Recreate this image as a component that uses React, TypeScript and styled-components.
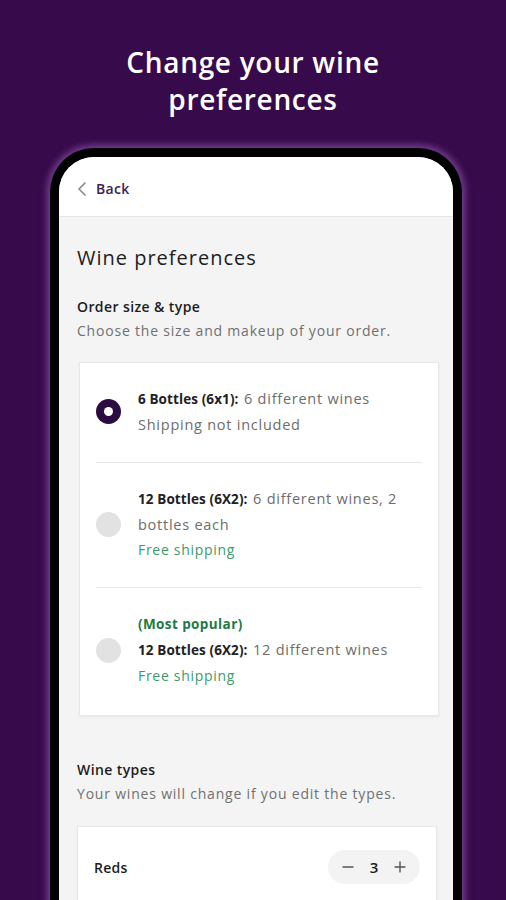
import React from "react";
import styled, { createGlobalStyle } from "styled-components";

const GlobalStyle = createGlobalStyle`
  html, body {
    margin: 0;
    padding: 0;
    background: #370a4b;
  }
  * {
    box-sizing: border-box;
  }
`;

const Page = styled.div`
  width: 506px;
  height: 900px;
  overflow: hidden;
  background: #370a4b;
  font-family: "Open Sans", sans-serif;
`;

const Heading = styled.h1`
  margin: 0;
  padding-top: 44px;
  height: 148px;
  text-align: center;
  color: #ffffff;
  font-family: "Open Sans", sans-serif;
  font-size: 28px;
  font-weight: 600;
  line-height: 37px;
  letter-spacing: 0.7px;
`;

const Phone = styled.div`
  margin: 0 44px 0 50px;
  height: 800px;
  border: 9px solid #000;
  border-bottom: none;
  border-radius: 44px 44px 0 0;
  box-shadow: 0 0 7px 3px rgba(170, 110, 200, 0.55);
  overflow: hidden;
  background: #f4f4f4;
`;

const TopBar = styled.div`
  height: 60px;
  display: flex;
  align-items: center;
  gap: 9px;
  padding: 4px 0 0 18px;
  background: #fff;
  border-bottom: 1px solid #e6e6e6;
  color: #3a2156;
  font-size: 14px;
  font-weight: 600;
  letter-spacing: 0.3px;
`;

const Content = styled.div`
  padding: 27px 14px 0 18px;
`;

const Title = styled.h2`
  margin: 0 0 24px;
  font-size: 20px;
  font-weight: 500;
  color: #1d1d1d;
  letter-spacing: 1px;
`;

const SectionTitle = styled.div`
  font-size: 14px;
  font-weight: 600;
  color: #1d1d1d;
  line-height: 24px;
  letter-spacing: 0.4px;
`;

const SectionHint = styled.div`
  font-size: 14px;
  color: #707070;
  line-height: 24px;
  letter-spacing: 0.8px;
`;

const Card = styled.div<{ $top: number; $inset: number }>`
  margin: ${(p) => p.$top}px 0 0 ${(p) => p.$inset}px;
  width: 360px;
  background: #fff;
  border: 1px solid #e8e8e8;
  box-shadow: 0 1px 2px rgba(0, 0, 0, 0.06);
  padding: 0 16px;
`;

const Option = styled.div<{ $last?: boolean }>`
  display: flex;
  align-items: center;
  gap: 17px;
  padding: ${(p) => (p.$last ? "24px 0 27px" : "23px 0 25px")};
  border-bottom: ${(p) => (p.$last ? "none" : "1px solid #e6e6e6")};
`;

const Radio = styled.div<{ $checked?: boolean }>`
  flex: none;
  width: 25px;
  height: 25px;
  border-radius: 50%;
  background: ${(p) => (p.$checked ? "#2c0b40" : "#e2e2e2")};
  display: flex;
  align-items: center;
  justify-content: center;
  &::after {
    content: "";
    display: ${(p) => (p.$checked ? "block" : "none")};
    width: 9px;
    height: 9px;
    border-radius: 50%;
    background: #fff;
  }
`;

const OptionText = styled.div`
  font-size: 14.5px;
  line-height: 25px;
  color: #6d6d6d;
  letter-spacing: 0.75px;
`;

const Strong = styled.span`
  font-size: 13.5px;
  font-weight: 700;
  color: #222;
  letter-spacing: 0.1px;
  margin-right: 1px;
`;

const Green = styled.div<{ $bold?: boolean }>`
  color: ${(p) => (p.$bold ? "#1d7a46" : "#3c9a6a")};
  font-weight: ${(p) => (p.$bold ? 700 : 400)};
  font-size: ${(p) => (p.$bold ? "13.5px" : "14px")};
  letter-spacing: ${(p) => (p.$bold ? "0.4px" : "0.7px")};
`;

const TypesSection = styled.div`
  margin-top: 42px;
`;

const TypeRow = styled.div`
  display: flex;
  align-items: center;
  justify-content: space-between;
  padding: 23px 0 30px;
`;

const TypeName = styled.div`
  font-size: 14px;
  font-weight: 600;
  color: #1d1d1d;
  letter-spacing: 0.3px;
`;

const Stepper = styled.div`
  width: 92px;
  height: 34px;
  border-radius: 17px;
  background: #f3f3f3;
  display: flex;
  align-items: center;
  justify-content: space-around;
  padding: 0 6px;
  font-size: 15px;
  color: #333;
`;

const StepCount = styled.span`
  font-weight: 600;
  color: #1d1d1d;
`;

const Chevron = () => (
  <svg width="10" height="16" viewBox="0 0 10 16" fill="none">
    <path d="M8 2L2 8l6 6" stroke="#888" strokeWidth="1.6" strokeLinecap="round" strokeLinejoin="round" />
  </svg>
);

const Minus = () => (
  <svg width="12" height="12" viewBox="0 0 12 12">
    <path d="M1 6h10" stroke="#555" strokeWidth="1.4" strokeLinecap="round" />
  </svg>
);

const Plus = () => (
  <svg width="12" height="12" viewBox="0 0 12 12">
    <path d="M1 6h10M6 1v10" stroke="#555" strokeWidth="1.4" strokeLinecap="round" />
  </svg>
);

const App: React.FC = () => {
  return (
    <Page>
      <GlobalStyle />
      <Heading>
        Change your wine
        <br />
        preferences
      </Heading>
      <Phone>
        <TopBar>
          <Chevron />
          Back
        </TopBar>
        <Content>
          <Title>Wine preferences</Title>
          <SectionTitle>Order size &amp; type</SectionTitle>
          <SectionHint>Choose the size and makeup of your order.</SectionHint>

          <Card $top={19} $inset={2}>
            <Option>
              <Radio $checked />
              <OptionText>
                <Strong>6 Bottles (6x1):</Strong> 6 different wines
                <br />
                Shipping not included
              </OptionText>
            </Option>
            <Option>
              <Radio />
              <OptionText>
                <Strong>12 Bottles (6X2):</Strong> 6 different wines, 2 bottles each
                <Green>Free shipping</Green>
              </OptionText>
            </Option>
            <Option $last>
              <Radio />
              <OptionText>
                <Green $bold>(Most popular)</Green>
                <Strong>12 Bottles (6X2):</Strong> 12 different wines
                <Green>Free shipping</Green>
              </OptionText>
            </Option>
          </Card>

          <TypesSection>
            <SectionTitle>Wine types</SectionTitle>
            <SectionHint>Your wines will change if you edit the types.</SectionHint>
            <Card $top={20} $inset={0}>
              <TypeRow>
                <TypeName>Reds</TypeName>
                <Stepper>
                  <Minus />
                  <StepCount>3</StepCount>
                  <Plus />
                </Stepper>
              </TypeRow>
            </Card>
          </TypesSection>
        </Content>
      </Phone>
    </Page>
  );
};

export default App;
